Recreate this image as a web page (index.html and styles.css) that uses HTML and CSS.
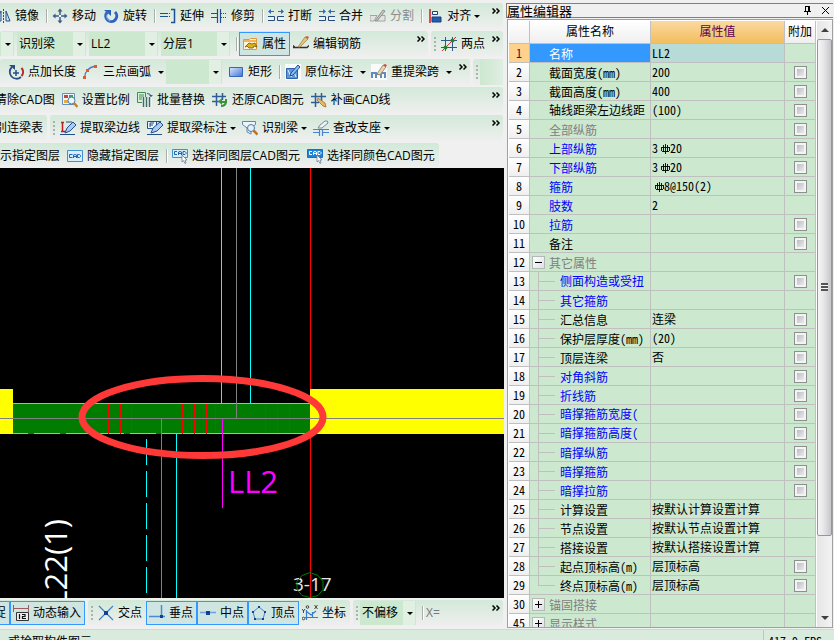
FILE: index.html
```html
<!DOCTYPE html>
<html lang="zh-CN">
<head>
<meta charset="utf-8">
<title>属性编辑器</title>
<link rel="stylesheet" href="styles.css">
</head>
<body>
<svg class="defs" aria-hidden="true">
  <defs>
    <linearGradient id="blue" x1="0" y1="0" x2="1" y2="1"><stop offset="0" stop-color="#dbe8ff"/><stop offset="1" stop-color="#3f73d8"/></linearGradient>
  </defs>
  <symbol id="mirror" viewBox="0 0 16 16"><path d="M8.500 1v14" stroke="#1f4e8c" stroke-dasharray="2 1"/><path d="M6 3v10H1zM11 3v10h4z" fill="#cfe0f6" stroke="#1f4e8c"/></symbol>
  <symbol id="move" viewBox="0 0 16 16"><path d="M8 2v12M2 8h12" stroke="#3b5a86" stroke-width="1.500"/><path d="M5.500 3.500L8 .5l2.500 3zM5.500 12.500L8 15.500l2.500-3zM3.500 5.500L.5 8l3 2.500zM12.500 5.500l3 2.500-3 2.500z" fill="#3b5a86"/><path d="M7 7h2v2H7z" fill="#fff"/></symbol>
  <symbol id="rotate" viewBox="0 0 16 16"><path d="M4 4.500a5.500 5.500 0 1 0 8-.5" fill="none" stroke="#2c62c0" stroke-width="3"/><path d="M4.500 6a4.500 4.500 0 0 0 3 7" fill="none" stroke="#8db8f2"/><path d="M1 2h7v6z" fill="#2c62c0"/></symbol>
  <symbol id="extend" viewBox="0 0 16 16"><path d="M0 5.500h7M0 8.500h7" stroke="#1d4f94"/><path d="M7 5.500h4M7 8.500h4" stroke="#1d4f94" stroke-dasharray="1 1"/><path d="M11 1.500h3.500v13H11" fill="none" stroke="#1d4f94" stroke-width="1.500"/></symbol>
  <symbol id="trim" viewBox="0 0 16 16"><path d="M0 5.500h6M0 9.500h6M6.500 1v14M9.500 1v14" stroke="#1d4f94" stroke-width="1.200"/><path d="M10 5.500h6M10 9.500h6" stroke="#1d4f94" stroke-dasharray="1 1"/></symbol>
  <symbol id="break" viewBox="0 0 16 16"><path d="M1 3.500h5M10 3.500h5" stroke="#2d6bc4"/><path d="M3 1L0 3.500 3 6zM13 1l3 2.500L13 6z" fill="#2d6bc4"/><path d="M0 8.500h6.500v4H0M16 8.500H9.500v4H16" fill="#e9f1fb" stroke="#26497c"/></symbol>
  <symbol id="merge" viewBox="0 0 16 16"><path d="M0 3.500h5M11 3.500h5" stroke="#2d6bc4"/><path d="M4 1l3 2.500L4 6zM12 1L9 3.500 12 6z" fill="#2d6bc4"/><path d="M0 8.500h6.500v4H0M16 8.500H9.500v4H16" fill="#e9f1fb" stroke="#26497c"/></symbol>
  <symbol id="split" viewBox="0 0 16 16"><path d="M0 7.500h7L4 13H0zM9 7.500h6V13H7z" fill="#e3e3e3" stroke="#a3a3a3"/><path d="M5 13L13 2l2 1-8 10z" fill="#c9c9c9" stroke="#8d8d8d"/></symbol>
  <symbol id="align" viewBox="0 0 16 16"><path d="M3 1v14" stroke="#d01818" stroke-width="1.500"/><path d="M5.500 3.500h5v3h-5z" fill="#fff" stroke="#173f80"/><path d="M5 9h9v5H5z" fill="#245db0" stroke="#173f80"/></symbol>
  <symbol id="prop" viewBox="0 0 16 16"><path d="M1.500 3.500h6l1-1h6v11h-13z" fill="#fff3dc" stroke="#e09b35"/><path d="M2 4h12v2H2z" fill="#f1b65c"/><path d="M3 11l4-4 3 1 3-1 2 4-3-1-1 2-4 0-2-2z" fill="#d8b31a" stroke="#70550e" stroke-width=".8"/></symbol>
  <symbol id="rebar" viewBox="0 0 16 16"><path d="M0 9.500l2 2h12l2-2M0 11.500h3" fill="none" stroke="#323232" stroke-width="1.300"/><path d="M5 11l7-10 3 2-8 8z" fill="#e0c77b" stroke="#9b7a42" stroke-width=".7"/><path d="M12 1l3 2 1-2-2-1z" fill="#d15b42"/></symbol>
  <symbol id="twopoint" viewBox="0 0 16 16"><path d="M4.500 1v14M11.500 1v14M0 4.500h16M0 11.500h16" stroke="#31588c"/><path d="M1 15L15 1" stroke="#c93333"/><circle cx="4.500" cy="11.500" r="2" fill="#28802d"/><circle cx="11.500" cy="4.500" r="2" fill="#28802d"/></symbol>
  <symbol id="pointlen" viewBox="0 0 16 16"><path d="M4 3a6.500 6.500 0 1 0 9 10" fill="none" stroke="#294f86" stroke-width="1.800"/><path d="M13.500 4a6 6 0 0 1 0 8" fill="none" stroke="#b8252d" stroke-width="2"/><path d="M1 1h6v5z" fill="#294f86"/><path d="M8 6v6M5 9h6" stroke="#294f86" stroke-width="1.500"/></symbol>
  <symbol id="arc" viewBox="0 0 16 16"><path d="M1.500 14Q2 4 12.500 2" fill="none" stroke="#487eb8" stroke-width="1.300"/><path d="M0 12h3v3H0zM3 5h3v3H3zM11 1h3v3h-3z" fill="#df5a32"/></symbol>
  <symbol id="rect" viewBox="0 0 16 16"><path d="M1.500 3.500h13v9h-13z" fill="url(#blue)" stroke="#3865b8"/></symbol>
  <symbol id="annot" viewBox="0 0 16 16"><path d="M0 0h16v16H0z" fill="#f8fbff"/><path d="M1.500 4.500h11v10h-11z" fill="#5f97df" stroke="#2d63ac"/><path d="M3 6l3 7 3-5 2 5" fill="none" stroke="#e6f0fd"/><path d="M5 12l1-3 7-8 2 2-7 8z" fill="#8dbcf2" stroke="#1f4e96"/></symbol>
  <symbol id="respan" viewBox="0 0 16 16"><path d="M0 0h16v16H0z" fill="#f8fafc"/><path d="M1 14V9h4v5M5 10h5M10 14V9h4v5" fill="none" stroke="#5f8dbf" stroke-width="2"/><path d="M6 10l6-9 3 2-6 8z" fill="#e5d6b1" stroke="#947b57" stroke-width=".8"/><path d="M12 1l3 2 1-2-2-1z" fill="#c54a34"/></symbol>
  <symbol id="scale" viewBox="0 0 16 16"><path d="M.5 1.500h12v11H.5z" fill="#edf4fc" stroke="#648fc5"/><path d="M2 3h4v3H2z" fill="#c74832"/><path d="M7 3h4v3H7z" fill="#4a9d54"/><path d="M2 8h4v3H2z" fill="#e2ae3e"/><circle cx="9.500" cy="8.500" r="3.500" fill="#e9f5ff" stroke="#53799d"/><path d="M12 11l3.500 4" stroke="#c68428" stroke-width="2.500"/></symbol>
  <symbol id="batch" viewBox="0 0 16 16"><path d="M.5.5h8v10h-8z" fill="#d8f0da" stroke="#408c56"/><path d="M2 3h5M2 5h5M2 7h5" stroke="#408c56"/><path d="M5 5h10v10H5z" fill="#eff4f6"/><path d="M6.500 5v10M9.500 5v10M12.500 5v10" stroke="#3e6e62" stroke-width="1.500"/><path d="M10 1.500q4 0 4 3" fill="none" stroke="#315c90"/><path d="M12 3h4l-2 2z" fill="#315c90"/></symbol>
  <symbol id="restore" viewBox="0 0 16 16"><path d="M4.500 1v13M10.500 1v7M0 4.500h14M0 9.500h7" stroke="#315d96" stroke-width="1.500"/><path d="M9 10h5V7M14 9q0 5-5 5" fill="none" stroke="#36943c" stroke-width="2"/><path d="M10 6v7L6 9.500z" fill="#36943c"/></symbol>
  <symbol id="patch" viewBox="0 0 16 16"><path d="M4.500 1v14M10.500 1v8M0 4.500h15M0 10.500h8" stroke="#315d96" stroke-width="1.500"/><path d="M7 6l7 5 1 4-3-1-6-6z" fill="#e7ba60" stroke="#9c6d31" stroke-width=".8"/></symbol>
  <symbol id="extractl" viewBox="0 0 16 16"><path d="M2.500 2v10M1 2.500h3M1 11.500h6" stroke="#bb2020" stroke-width="1.500"/><path d="M0 14.500h15" stroke="#244f8b"/><path d="M5 13l2-5 6-6 3 3-6 6z" fill="#a9cbf5" stroke="#244f8b"/><path d="M6 2h6" stroke="#244f8b"/></symbol>
  <symbol id="extractf" viewBox="0 0 16 16"><path d="M.5 1.500h9v7h-9zM3 7V3h4M3 5h3" fill="#edf4fb" stroke="#244f8b"/><path d="M0 14.500h15M8 1.500h6" stroke="#244f8b"/><path d="M4 13l2-5 7-6 3 3-6 6z" fill="#a9cbf5" stroke="#244f8b"/></symbol>
  <symbol id="funnel" viewBox="0 0 16 16"><path d="M.5 1.500h13v3L9 8v6l-4-2V8L.5 4.500z" fill="#eff4fb" stroke="#6484b0"/><circle cx="9" cy="8" r="3.500" fill="#e0f1ff" stroke="#55789d"/><path d="M11.500 10.500l4 4" stroke="#b87628" stroke-width="2.500"/></symbol>
  <symbol id="support" viewBox="0 0 16 16"><path d="M0 9.500h16M0 12.500h6M10 12.500h6M6.500 9v7M9.500 9v7" stroke="#4385d2" stroke-width="1.200"/><path d="M5 8l2-3 5-4q3-1 3 2L9 8z" fill="#edf0f4" stroke="#788a9c"/></symbol>
  <symbol id="cad" viewBox="0 0 16 16"><path d="M.5 2.500h15v11H.5z" fill="#d9ecfa" stroke="#438fd0"/><path d="M5.500 6.500h-3v3h3M6.500 10V7l1.500-.5L9.500 7v3M7 8.500h2M10.500 6.500h2l1 1v1l-1 1h-2z" fill="none" stroke="#1c68ae"/></symbol>
  <symbol id="cadlayer" viewBox="0 0 16 16"><path d="M.5 1.500h15v8H.5z" fill="#d9ecfa" stroke="#438fd0"/><path d="M5 3.500H2.500v3H5M6.500 7V4L8 3.500 9.500 4v3M7 5.500h2M11 3.500h2l1 1v1l-1 1h-2z" fill="none" stroke="#1c68ae"/><path d="M10 7l5 5h-2l1 3-1 .5-1.500-3-1.500 1.500z" fill="#fff" stroke="#687f99" stroke-width=".8"/></symbol>
  <symbol id="cadcolor" viewBox="0 0 16 16"><path d="M.5 1.500h15v8H.5z" fill="#1d82db" stroke="#1a70c0"/><path d="M5 3.500H2.500v3H5M6.500 7V4L8 3.500 9.500 4v3M7 5.500h2M11 3.500h2l1 1v1l-1 1h-2z" fill="none" stroke="#fff"/><path d="M10 7l5 5h-2l1 3-1 .5-1.500-3-1.500 1.500z" fill="#fff" stroke="#687f99" stroke-width=".8"/></symbol>
  <symbol id="dyn" viewBox="0 0 16 16"><path d="M.5 0v7M15.500 0v7M0 3.500h16" stroke="#a05c5c"/><path d="M3.500 7.500h12v8h-12z" fill="#eee" stroke="#333"/><path d="M6.500 9v5M9 9.500h3v2H9.500v2H13" fill="none" stroke="#111" stroke-width="1.200"/></symbol>
  <symbol id="cross" viewBox="0 0 16 16"><path d="M1 1l14 14M15 1L1 15" stroke="#3e7fd0" stroke-width="1.200"/><path d="M6 6h4v4H6z" fill="#123f91"/></symbol>
  <symbol id="perp" viewBox="0 0 16 16"><path d="M0 11.500h16M12.500 0v11" stroke="#4c8ad8" stroke-width="1.500"/><path d="M11 10h3v3h-3z" fill="#123f91"/></symbol>
  <symbol id="mid" viewBox="0 0 16 16"><path d="M0 7.500h16" stroke="#6f9fe0" stroke-width="1.500"/><path d="M6 6h4v4H6z" fill="#123f91"/></symbol>
  <symbol id="vertex" viewBox="0 0 16 16"><path d="M8 2l6 5-2 7H4L2 7z" fill="none" stroke="#4486d2"/><path d="M7 1h2v2H7zM13 6h2v2h-2zM11 13h2v2h-2zM3 13h2v2H3zM1 6h2v2H1z" fill="#123f91"/></symbol>
  <symbol id="coord" viewBox="0 0 16 16"><path d="M4.500 5v10M3 12.500h13M4 6l5 4 5-4M10.500 7v6" fill="none" stroke="#347cd0" stroke-width="1.200"/><path d="M0 4l1.500 2L3 4M1.500 6v2M12.500 0l3 4M15.500 0l-3 4" fill="none" stroke="#222" stroke-width=".8"/><circle cx="5.500" cy="2" r="1.300" fill="none" stroke="#222" stroke-width=".8"/><circle cx="1.500" cy="13.500" r="1.300" fill="none" stroke="#222" stroke-width=".8"/></symbol>
  <symbol id="more" viewBox="0 0 8 6"><path d="M.5.5L3 3 .5 5.500M4.500.5L7 3 4.500 5.500" fill="none" stroke="#000" stroke-width="1.500"/></symbol>
  <symbol id="phi" viewBox="0 0 10 10"><path d="M5.500 0v10M3.500 1v7M7.500 1v7M1 3.500h9M2 7.500h7M1.500 4v3M9.500 4v3" stroke="#000" fill="none" stroke-width=".9"/></symbol>
</svg>

<main class="workspace">
  <section class="editor">
    <div class="toolbars">
      <div class="row">
        <div class="bar grow cut">
          <button class="tool"><svg class="icon"><use href="#mirror"/></svg>镜像</button>
          <span class="sep"></span>
          <button class="tool"><svg class="icon"><use href="#move"/></svg>移动</button>
          <button class="tool"><svg class="icon"><use href="#rotate"/></svg>旋转</button>
          <span class="sep"></span>
          <button class="tool"><svg class="icon"><use href="#extend"/></svg>延伸</button>
          <button class="tool"><svg class="icon"><use href="#trim"/></svg>修剪</button>
          <span class="sep"></span>
          <button class="tool"><svg class="icon"><use href="#break"/></svg>打断</button>
          <button class="tool"><svg class="icon"><use href="#merge"/></svg>合并</button>
          <button class="tool" disabled><svg class="icon"><use href="#split"/></svg>分割</button>
          <span class="sep"></span>
          <button class="tool menu"><svg class="icon"><use href="#align"/></svg>对齐</button>
          <button class="more" aria-label="更多"><svg><use href="#more"/></svg></button>
        </div>
      </div>
      <div class="row">
        <div class="bar grow">
          <span class="combo stub"><select aria-label="楼层"><option></option></select></span>
          <span class="combo"><select aria-label="构件类型"><option>识别梁</option></select></span>
          <span class="combo"><select aria-label="构件"><option>LL2</option></select></span>
          <span class="combo"><select aria-label="分层"><option>分层1</option></select></span>
          <span class="sep"></span>
          <button class="tool on"><svg class="icon"><use href="#prop"/></svg>属性</button>
          <button class="tool"><svg class="icon"><use href="#rebar"/></svg>编辑钢筋</button>
          <button class="more" aria-label="更多"><svg><use href="#more"/></svg></button>
        </div>
        <div class="bar">
          <span class="grip"></span>
          <button class="tool"><svg class="icon"><use href="#twopoint"/></svg>两点</button>
          <button class="more" aria-label="更多"><svg><use href="#more"/></svg></button>
        </div>
      </div>
      <div class="row">
        <div class="bar grow inset">
          <button class="tool"><svg class="icon"><use href="#pointlen"/></svg>点加长度</button>
          <button class="tool"><svg class="icon"><use href="#arc"/></svg>三点画弧</button>
          <button class="drop" aria-label="三点画弧选项"></button>
          <span class="combo short"><select aria-label="半径"><option></option></select></span>
          <button class="tool"><svg class="icon"><use href="#rect"/></svg>矩形</button>
          <span class="sep"></span>
          <button class="tool"><svg class="icon"><use href="#annot"/></svg>原位标注</button>
          <button class="drop" aria-label="原位标注选项"></button>
          <button class="tool"><svg class="icon"><use href="#respan"/></svg>重提梁跨</button>
          <button class="drop" aria-label="重提梁跨选项"></button>
          <button class="more" aria-label="更多"><svg><use href="#more"/></svg></button>
        </div>
        <div class="bar">
          <span class="grip"></span>
          <span class="blank"></span>
        </div>
      </div>
      <div class="row">
        <div class="bar grow cut">
          <button class="tool">清除CAD图</button>
          <button class="tool"><svg class="icon"><use href="#scale"/></svg>设置比例</button>
          <button class="tool"><svg class="icon"><use href="#batch"/></svg>批量替换</button>
          <button class="tool"><svg class="icon"><use href="#restore"/></svg>还原CAD图元</button>
          <button class="tool"><svg class="icon"><use href="#patch"/></svg>补画CAD线</button>
          <button class="more" aria-label="更多"><svg><use href="#more"/></svg></button>
        </div>
      </div>
      <div class="row">
        <div class="bar cut">
          <button class="tool">别连梁表</button>
        </div>
        <div class="bar grow">
          <span class="grip"></span>
          <button class="tool"><svg class="icon"><use href="#extractl"/></svg>提取梁边线</button>
          <button class="tool menu"><svg class="icon"><use href="#extractf"/></svg>提取梁标注</button>
          <button class="tool menu"><svg class="icon"><use href="#funnel"/></svg>识别梁</button>
          <button class="tool menu"><svg class="icon"><use href="#support"/></svg>查改支座</button>
          <button class="more" aria-label="更多"><svg><use href="#more"/></svg></button>
        </div>
      </div>
      <div class="row">
        <div class="bar edge">
          <button class="tool">示指定图层</button>
          <button class="tool"><svg class="icon"><use href="#cad"/></svg>隐藏指定图层</button>
          <span class="sep"></span>
          <button class="tool"><svg class="icon"><use href="#cadlayer"/></svg>选择同图层CAD图元</button>
          <button class="tool"><svg class="icon"><use href="#cadcolor"/></svg>选择同颜色CAD图元</button>
        </div>
      </div>
    </div>

    <div class="canvas">
      <svg class="drawing" role="img" aria-label="梁平面图">
        <g transform="translate(0 -168)" shape-rendering="crispEdges">
          <path d="M310.500 168v430" stroke="#f00"/>
          <path d="M0 389h13v45H0zM310 389h2000v45H310z" fill="#ff0"/>
          <path d="M13 403h297v31H13z" fill="#007d00"/>
          <path d="M13 403.500h297M13 433.500h15M34 433.500h26M66 433.500h58M130 433.500h26M162 433.500h148" stroke="#0ff"/>
          <path d="M108.500 404v30M120.500 404v30M182.500 404v30M194.500 404v30M206.500 404v30" stroke="#f00"/>
          <path d="M131.500 404v29M191.500 404v29M203.500 404v29M215.500 404v29M265.500 404v29M277.500 404v29M289.500 404v29" stroke="#c81e00"/>
          <path d="M221.500 168v235M250.500 168v235M176.500 434v164" stroke="#0ff"/>
          <path d="M146.500 439v159" stroke="#0ff" stroke-dasharray="26 6"/>
          <path d="M0 418.500h2310M161.500 419v179M236.500 168v250" stroke="#808080"/>
          <path d="M222.500 419v89" stroke="#f0f"/>
        </g>
        <g transform="translate(0 -168)">
          <ellipse cx="202.500" cy="417" rx="120.500" ry="38.500" fill="none" stroke="#ff3838" stroke-width="7"/>
          <text class="cadtext" x="228" y="493" font-size="31" fill="#f0f">LL2</text>
          <text class="cadtext" x="293" y="591" font-size="19" fill="#e6e6e6">3-17</text>
          <path d="M310.500 570v28" stroke="#f00" shape-rendering="crispEdges"/>
          <path d="M310 572.500l8 3 5 6 0 8-5 6-8 2-8-2-5-6 0-8 5-6z" fill="none" stroke="#008000"/>
          <text class="cadtext" transform="translate(67 519) rotate(-90)" text-anchor="end" font-size="31" fill="#fff">L22(1)</text>
        </g>
      </svg>
    </div>

    <div class="row snap">
      <div class="bar shift">
        <button class="tool on">捉</button>
        <button class="tool on"><svg class="icon"><use href="#dyn"/></svg>动态输入</button>
      </div>
      <div class="bar">
        <span class="grip"></span>
        <button class="tool"><svg class="icon"><use href="#cross"/></svg>交点</button>
        <button class="tool on"><svg class="icon"><use href="#perp"/></svg>垂点</button>
        <button class="tool on"><svg class="icon"><use href="#mid"/></svg>中点</button>
        <button class="tool on"><svg class="icon"><use href="#vertex"/></svg>顶点</button>
        <button class="tool"><svg class="icon"><use href="#coord"/></svg>坐标</button>
      </div>
      <div class="bar grow">
        <span class="grip"></span>
        <span class="combo short"><select aria-label="偏移方式"><option>不偏移</option></select></span>
        <span class="sep"></span>
        <span class="offset">X=</span>
        <button class="more" aria-label="更多"><svg><use href="#more"/></svg></button>
      </div>
    </div>
  </section>

  <aside class="panel">
    <header class="title">
      <h1>属性编辑器</h1>
      <button aria-label="固定"><svg viewBox="0 0 9 9"><path d="M2.500 0v5M2 .5h5M5.500 0v5M6.500 0v5M1 5.500h7M4.500 6v3" stroke="#000"/></svg></button>
      <button aria-label="关闭"><svg viewBox="0 0 9 9"><path d="M1 1l7 7M8 1L1 8" stroke="#000"/></svg></button>
    </header>
    <div class="frame">
      <div class="view">
      <table>
        <colgroup><col class="c-num"><col class="c-name"><col class="c-value"><col class="c-add"></colgroup>
        <thead><tr><th></th><th>属性名称</th><th class="active">属性值</th><th>附加</th></tr></thead>
        <tbody>
          <tr class="selected"><th>1</th><td>名称</td><td>LL2</td><td></td></tr>
          <tr><th>2</th><td>截面宽度(mm)</td><td>200</td><td><input type="checkbox" aria-label="附加 2"></td></tr>
          <tr><th>3</th><td>截面高度(mm)</td><td>400</td><td><input type="checkbox" aria-label="附加 3"></td></tr>
          <tr class="long"><th>4</th><td>轴线距梁左边线距</td><td>(100)</td><td><input type="checkbox" aria-label="附加 4"></td></tr>
          <tr class="dim"><th>5</th><td>全部纵筋</td><td></td><td><input type="checkbox" aria-label="附加 5"></td></tr>
          <tr class="key"><th>6</th><td>上部纵筋</td><td>3<svg class="phi"><use href="#phi"/></svg>20</td><td><input type="checkbox" aria-label="附加 6"></td></tr>
          <tr class="key"><th>7</th><td>下部纵筋</td><td>3<svg class="phi"><use href="#phi"/></svg>20</td><td><input type="checkbox" aria-label="附加 7"></td></tr>
          <tr class="key"><th>8</th><td>箍筋</td><td><svg class="phi"><use href="#phi"/></svg>8@150(2)</td><td><input type="checkbox" aria-label="附加 8"></td></tr>
          <tr class="key"><th>9</th><td>肢数</td><td>2</td><td></td></tr>
          <tr class="key"><th>10</th><td>拉筋</td><td></td><td><input type="checkbox" aria-label="附加 10"></td></tr>
          <tr><th>11</th><td>备注</td><td></td><td><input type="checkbox" aria-label="附加 11"></td></tr>
          <tr class="dim group open"><th>12</th><td><button class="toggle" aria-label="折叠"></button>其它属性</td><td></td><td></td></tr>
          <tr class="key child long"><th>13</th><td>侧面构造或受扭</td><td></td><td><input type="checkbox" aria-label="附加 13"></td></tr>
          <tr class="key child"><th>14</th><td>其它箍筋</td><td></td><td></td></tr>
          <tr class="child"><th>15</th><td>汇总信息</td><td>连梁</td><td><input type="checkbox" aria-label="附加 15"></td></tr>
          <tr class="child"><th>16</th><td>保护层厚度(mm)</td><td>(20)</td><td><input type="checkbox" aria-label="附加 16"></td></tr>
          <tr class="child"><th>17</th><td>顶层连梁</td><td>否</td><td><input type="checkbox" aria-label="附加 17"></td></tr>
          <tr class="key child"><th>18</th><td>对角斜筋</td><td></td><td><input type="checkbox" aria-label="附加 18"></td></tr>
          <tr class="key child"><th>19</th><td>折线筋</td><td></td><td><input type="checkbox" aria-label="附加 19"></td></tr>
          <tr class="key child long"><th>20</th><td>暗撑箍筋宽度(</td><td></td><td><input type="checkbox" aria-label="附加 20"></td></tr>
          <tr class="key child long"><th>21</th><td>暗撑箍筋高度(</td><td></td><td><input type="checkbox" aria-label="附加 21"></td></tr>
          <tr class="key child"><th>22</th><td>暗撑纵筋</td><td></td><td><input type="checkbox" aria-label="附加 22"></td></tr>
          <tr class="key child"><th>23</th><td>暗撑箍筋</td><td></td><td><input type="checkbox" aria-label="附加 23"></td></tr>
          <tr class="key child"><th>24</th><td>暗撑拉筋</td><td></td><td><input type="checkbox" aria-label="附加 24"></td></tr>
          <tr class="child"><th>25</th><td>计算设置</td><td>按默认计算设置计算</td><td></td></tr>
          <tr class="child"><th>26</th><td>节点设置</td><td>按默认节点设置计算</td><td></td></tr>
          <tr class="child"><th>27</th><td>搭接设置</td><td>按默认搭接设置计算</td><td></td></tr>
          <tr class="child"><th>28</th><td>起点顶标高(m)</td><td>层顶标高</td><td><input type="checkbox" aria-label="附加 28"></td></tr>
          <tr class="child last"><th>29</th><td>终点顶标高(m)</td><td>层顶标高</td><td><input type="checkbox" aria-label="附加 29"></td></tr>
          <tr class="dim group"><th>30</th><td><button class="toggle plus" aria-label="展开"></button>锚固搭接</td><td></td><td></td></tr>
          <tr class="dim group"><th>45</th><td><button class="toggle plus" aria-label="展开"></button>显示样式</td><td></td><td></td></tr>
        </tbody>
      </table>
      </div>
      <div class="scroll">
        <span class="arrow up"></span>
        <span class="thumb"><i></i></span>
        <span class="arrow down"></span>
      </div>
    </div>
  </aside>
</main>
<footer class="status">
  <span class="hint">或拾取构件图元</span>
  <span class="fps">417.9 FPS</span>
</footer>
</body>
</html>
```
FILE: styles.css
```css
* { box-sizing: border-box; }

:root {
  --line: #c0c0c0;
  --cell: #cce8cf;
  --accent: #3399ff;
  --ui: "Open Sans", "Noto Sans CJK SC", sans-serif;
  --grid: "Noto Sans CJK SC", sans-serif;
}

body {
  margin: 0;
  height: 100vh;
  overflow: hidden;
  display: flex;
  flex-direction: column;
  background: #f0f0f0;
  color: #000;
  font: 12px/16px var(--ui);
}

button, select {
  margin: 0;
  padding: 0;
  border: 0;
  background: none;
  color: inherit;
  font: inherit;
}

.defs { position: absolute; width: 0; height: 0; }

.workspace {
  flex: 1;
  min-height: 0;
  display: grid;
  grid-template-columns: minmax(0, 1fr) 330px;
}

.editor {
  min-width: 0;
  min-height: 0;
  display: flex;
  flex-direction: column;
  overflow: hidden;
}

/* Toolbars */
.toolbars {
  padding-top: 3px;
  display: flex;
  flex-direction: column;
  gap: 2px;
}

.row { display: flex; gap: 3px; padding-right: 1px; }
.row:last-child .edge { height: 25px; }
.row.snap { padding: 2px 1px 3px 0; }

.bar {
  display: flex;
  align-items: center;
  height: 26px;
  border-radius: 3px;
  background: linear-gradient(#d2e9d8, #efefef);
  white-space: nowrap;
}
.bar.grow { flex: 1; }
.bar.cut { margin-left: -8px; }
.bar.shift { margin-left: -9px; }
.bar.edge { margin-left: -3px; }
.bar.inset { padding-left: 5px; }

.tool {
  display: flex;
  align-items: center;
  gap: 4px;
  height: 24px;
  padding: 0 4px 0 3px;
}
.tool:disabled { color: #8c8c8c; }
.tool.on { background: #cfe5e2; box-shadow: inset 0 0 0 1px var(--accent); }
.icon { width: 16px; height: 16px; flex: none; fill: none; }

.menu { padding-right: 3px; }
.menu::after, .drop::after, .combo::after {
  content: "";
  border: 3px solid transparent;
  border-top-color: #000;
  border-bottom: 0;
}
.menu::after { margin-left: -1px; }
.drop { width: 11px; display: flex; justify-content: center; }

.sep {
  width: 2px;
  height: 14px;
  margin: 0 1px 0 3px;
  border-left: 1px solid #a9aeab;
  background: #fff;
}

.grip {
  width: 2px;
  height: 15px;
  margin: 0 2px 0 3px;
  background: repeating-linear-gradient(#a9b3ac 0 2px, transparent 2px 4px);
}

.more { align-self: flex-start; margin-left: auto; padding: 5px 3px 0 3px; }
.more svg { display: block; width: 8px; height: 6px; }

.combo {
  position: relative;
  width: 69px;
  height: 24px;
  margin-right: 3px;
  background: linear-gradient(90deg, var(--cell) calc(100% - 12px), #e2f0e4 0);
  border-right: 1px solid var(--cell);
}
.combo.stub { width: 14px; }
.combo.short { width: 56px; }
.combo select {
  appearance: none;
  width: 100%;
  height: 100%;
  padding: 0 12px 0 2px;
}
.combo::after { position: absolute; right: 2px; top: 11px; pointer-events: none; }

.blank { width: 23px; height: 26px; background: linear-gradient(90deg, var(--cell), #dfeee2); }
.offset { color: #777; padding-left: 1px; }

/* Drawing area */
.canvas { flex: 1; min-height: 0; background: #000; overflow: hidden; }
.drawing { display: block; width: 100%; height: 100%; }
.cadtext { font-family: "Open Sans", sans-serif; }

/* Property panel */
.panel {
  min-height: 0;
  padding: 3px 1px 0 3px;
  display: flex;
  flex-direction: column;
  gap: 1px;
  font-family: var(--grid);
  font-feature-settings: "hwid";
}

.title {
  display: flex;
  align-items: center;
  gap: 9px;
  height: 15px;
  padding-right: 3px;
  border: 1px solid #808080;
  border-right: 0;
  margin-left: -1px;
}
.title h1 { margin: 0; flex: 1; font-size: 13px; font-weight: 400; line-height: 13px; }
.title svg { display: block; width: 9px; height: 9px; fill: none; }

.frame {
  flex: 1;
  min-height: 0;
  display: flex;
  gap: 1px;
  padding: 1px 0 0 1px;
  border: 1px solid #a0a0a0;
  background: #fff;
  margin-bottom: 1px;
}
.view { flex: 1; min-width: 0; overflow: hidden; }

table { width: 100%; table-layout: fixed; border-spacing: 0; }
.c-num { width: 21px; }
.c-name { width: 121px; }
.c-add { width: 31px; }

th, td {
  height: 19px;
  padding: 0;
  border: solid var(--line);
  border-width: 0 1px 1px 0;
  font-weight: 400;
  line-height: 18px;
  white-space: nowrap;
  overflow: hidden;
}
th { background: linear-gradient(#fff, #efefef); text-align: center; }
thead th { height: 23px; line-height: 22px; font-family: var(--ui); }
thead .active { background: linear-gradient(#fbd9a0, #f2be5e); color: #600050; }

td { background: var(--cell); }
td:nth-child(2) { position: relative; padding-left: 19px; line-height: 16px; padding-top: 2px; }
.long td:nth-child(2) { padding-top: 0; line-height: 18px; }
td:nth-child(3) { padding-left: 1px; }
td:nth-child(4) { text-align: center; }

.selected th { background: #ffd28c; color: #600050; }
.selected td:nth-child(2) { background: var(--accent); color: #fff; }
.selected td:nth-child(3) { background: #b7dcd8; }
.dim td { color: #808080; }
.key td:nth-child(2) { color: #00f; }

/* Tree guides inside the name column */
.child td:nth-child(2) { padding-left: 30px; }
.child td:nth-child(2)::before {
  content: "";
  position: absolute;
  left: 8px;
  top: 0;
  width: 1px;
  height: 100%;
  background: var(--line);
}
.child.last td:nth-child(2)::before { height: 9px; }
.child td:nth-child(2)::after {
  content: "";
  position: absolute;
  left: 8px;
  top: 9px;
  width: 17px;
  height: 1px;
  background: var(--line);
}

.toggle {
  position: absolute;
  left: 2px;
  top: 3px;
  width: 13px;
  height: 13px;
  border: 1px solid #b4b9b5;
  background:
    linear-gradient(#000, #000) center / 7px 1px no-repeat,
    linear-gradient(135deg, #fff, #dcdfe4);
}
.toggle.plus {
  background:
    linear-gradient(#000, #000) center / 7px 1px no-repeat,
    linear-gradient(#000, #000) center / 1px 7px no-repeat,
    linear-gradient(135deg, #fff, #dcdfe4);
}

input[type="checkbox"] {
  appearance: none;
  display: block;
  width: 13px;
  height: 13px;
  margin: 0 auto;
  border: 1px solid #8e8f8f;
  background: linear-gradient(135deg, #aeb3b9, #f6f6f6);
  box-shadow: inset 0 0 0 2px #f4f4f4;
}

.phi { width: 10px; height: 10px; margin: 0 0 0 2px; vertical-align: -1px; }

/* Scroll bar */
.scroll {
  width: 15px;
  display: flex;
  flex-direction: column;
  align-items: center;
  background: linear-gradient(90deg, #e6e6e6, #f3f3f3);
}
.arrow { height: 18px; display: flex; align-items: center; }
.arrow::after { content: ""; border: 4px solid transparent; }
.up::after { border-bottom-color: #404040; border-top: 0; }
.down { margin-top: auto; }
.down::after { border-top-color: #404040; border-bottom: 0; }
.thumb {
  width: 100%;
  height: 82%;
  display: flex;
  align-items: center;
  justify-content: center;
  border: 1px solid #979797;
  border-radius: 2px;
  background: linear-gradient(90deg, #f6f6f6, #e6e6e8 45%, #c6c7cb);
}
.thumb i { width: 7px; height: 8px; background: repeating-linear-gradient(#555 0 2px, #f5f5f5 2px 3px); }

/* Status bar */
.status {
  display: flex;
  height: 11px;
  overflow: hidden;
  background: #d9ebdd;
  border-top: 1px solid #c9dccd;
  font-family: var(--grid);
  font-feature-settings: "hwid";
}
.hint { flex: 1; padding: 3px 0 0 8px; }
.fps { width: 71px; padding: 3px 0 0 4px; border-left: 1px solid #b9c9bd; }
```
